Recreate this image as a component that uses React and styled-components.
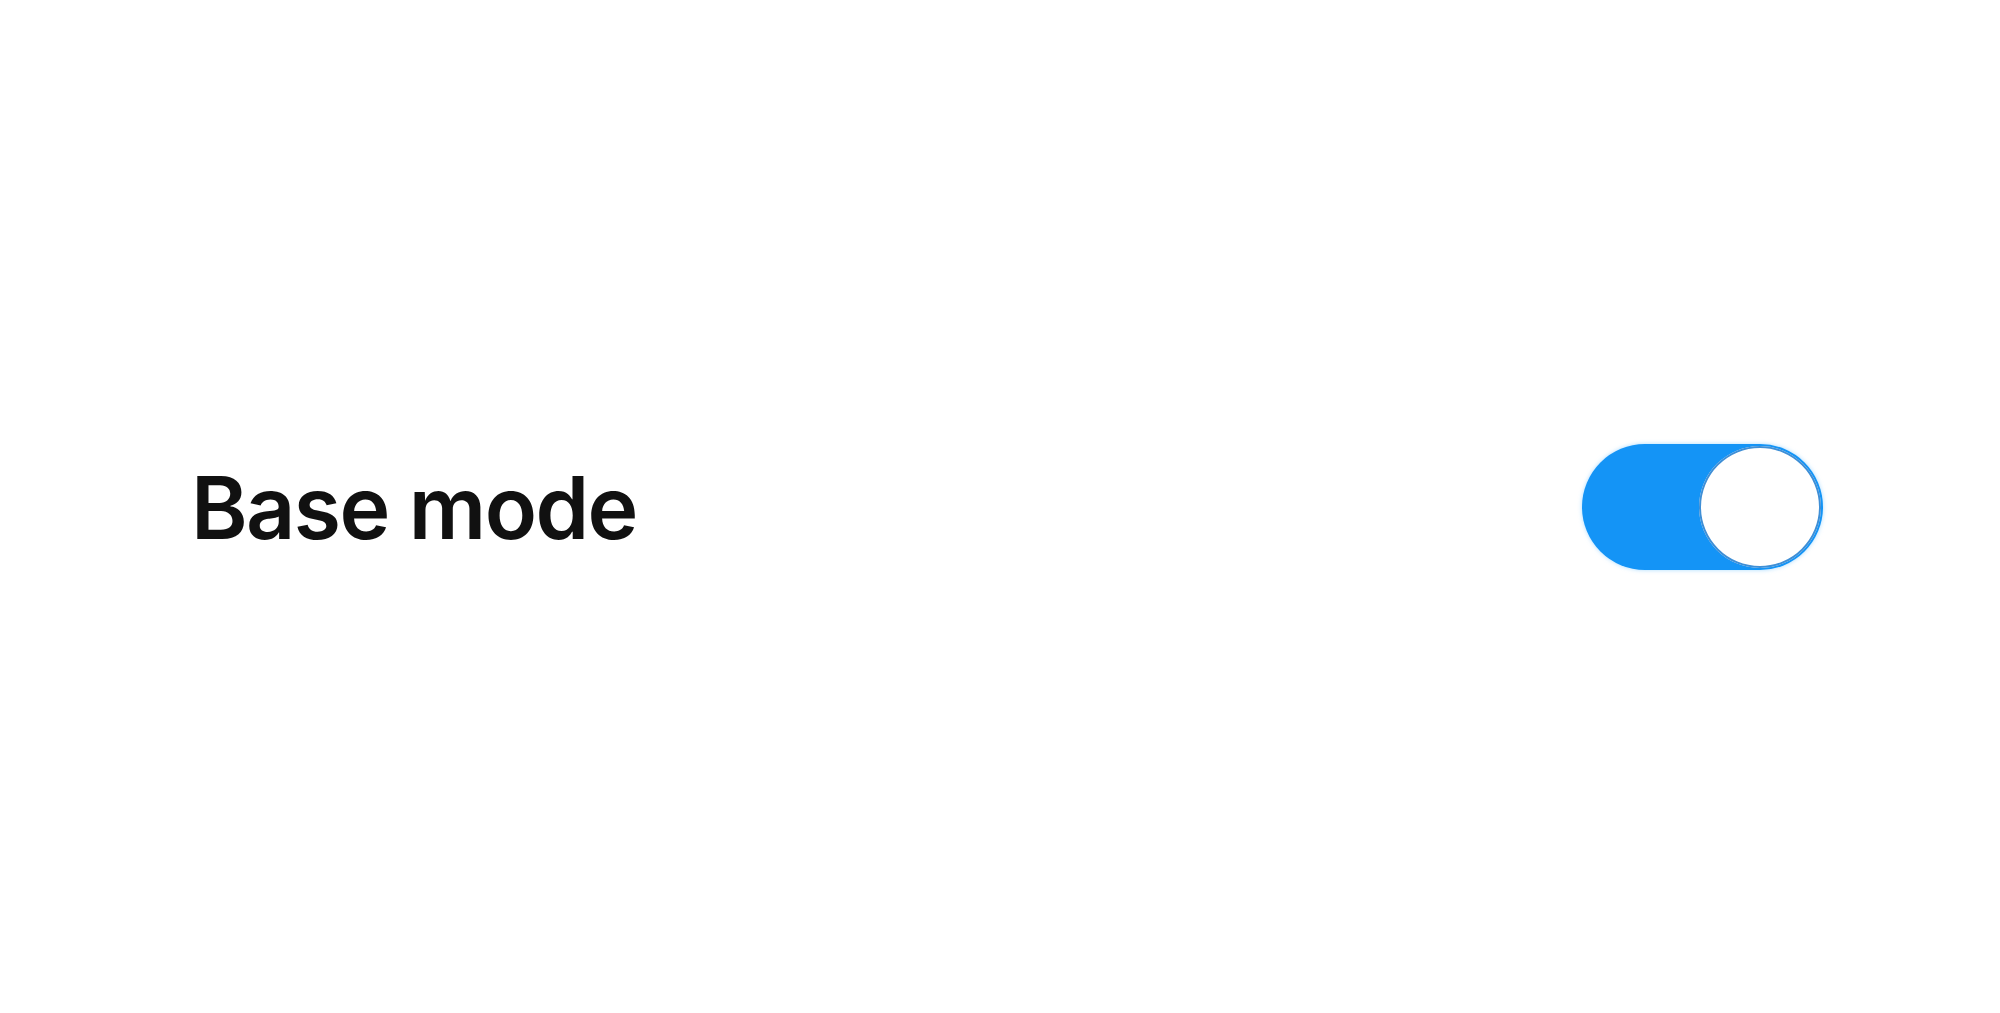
import React, { useState } from 'react';
import styled, { createGlobalStyle } from 'styled-components';

const GlobalStyle = createGlobalStyle`
	html, body {
		margin:0;
		padding:0;
		background:#ffffff;
	}
`;

function App() {
	const [on, setOn] = useState(true);
	return (
		<Page>
			<GlobalStyle />
			<Row>
				<Label>Base mode</Label>
				<Track $on={on} onClick={() => setOn(!on)} aria-pressed={on}>
					<Knob $on={on} />
				</Track>
			</Row>
		</Page>
	);
}

export default App;

const Page = styled.div`
	height:100vh;
	display:flex;
	align-items:center;
`;

const Row = styled.div`
	flex:1;
	display:flex;
	align-items:center;
	justify-content:space-between;
	padding:0 177px 0 191px;
`;

const Label = styled.span`
	font-family:Inter, "Noto Sans", sans-serif;
	font-weight:600;
	font-size:86px;
	color:#111111;
	letter-spacing:-1.6px;
	line-height:1;
	margin-top:3px;
`;

const Track = styled.button`
	width:241px;
	height:126px;
	border:none;
	padding:0 2px;
	border-radius:63px;
	background:${p => (p.$on ? '#1494f6' : '#d8d8de')};
	box-shadow:0 0 4px rgba(100, 190, 255, 0.55);
	display:flex;
	align-items:center;
	justify-content:${p => (p.$on ? 'flex-end' : 'flex-start')};
	cursor:pointer;
`;

const Knob = styled.span`
	width:122px;
	height:122px;
	border-radius:50%;
	background:#ffffff;
	box-shadow:0 0 0 2px #3f8fd6 inset;
`;
